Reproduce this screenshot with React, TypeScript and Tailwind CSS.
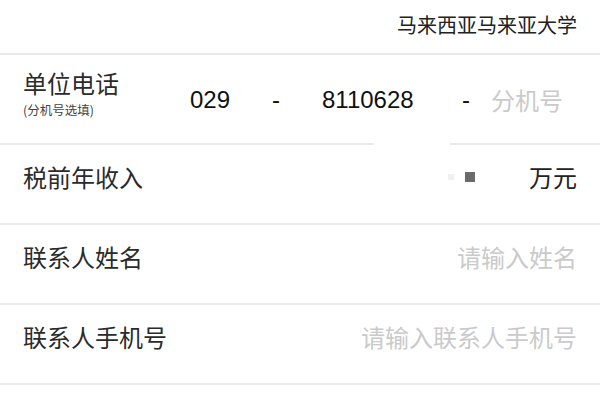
const font = { fontFamily: '"Noto Sans CJK SC", "Noto Sans", sans-serif' }

const Divider = ({ gap = false }: { gap?: boolean }) =>
  gap ? (
    <div className="flex h-[2px]">
      <div className="w-[373px] bg-[#e9e9e9]" />
      <div className="w-[77px]" />
      <div className="flex-1 bg-[#e9e9e9]" />
    </div>
  ) : (
    <div className="h-[2px] bg-[#e9e9e9]" />
  )

const Row = ({ label, children }: { label: string; children: React.ReactNode }) => (
  <div className="flex h-[78px] items-center justify-between px-[23px] pb-[14px]">
    <span className="text-[24px] leading-[30px] text-[#2b2b2b]">{label}</span>
    {children}
  </div>
)

export default function App() {
  return (
    <div className="w-[600px] h-[400px] overflow-hidden bg-white" style={font}>
      <div className="flex h-[53px] items-center justify-end pr-[23px] pb-[4px] text-[20px] text-[#222]">
        马来西亚马来亚大学
      </div>
      <Divider />

      <div className="flex h-[88px] items-center px-[23px]">
        <div className="flex w-[167px] flex-col mb-[11px]">
          <span className="text-[24px] leading-[26px] text-[#2b2b2b]">单位电话</span>
          <span className="mt-[6px] text-[12.5px] leading-[15px] text-[#444]">(分机号选填)</span>
        </div>
        <div
          className="flex items-center pt-[1px] text-[24px] text-[#111]"
          style={{ fontFamily: '"Liberation Sans", "Noto Sans CJK SC", sans-serif' }}
        >
          <span className="w-[82px]">029</span>
          <span className="w-[50px]">-</span>
          <span className="w-[140px]">8110628</span>
          <span className="w-[29px]">-</span>
          <span className="text-[#cacaca]" style={font}>
            分机号
          </span>
        </div>
      </div>
      <Divider gap />

      <Row label="税前年收入">
        <div className="flex items-center">
          <span className="h-[6px] w-[6px] bg-[#f0f0f0]" />
          <span className="ml-[11px] h-[10px] w-[10px] bg-[#6a6a6a]" />
          <span className="ml-[54px] text-[24px] leading-[30px] text-[#222]">万元</span>
        </div>
      </Row>
      <Divider />

      <Row label="联系人姓名">
        <span className="text-[24px] leading-[30px] text-[#cacaca]">请输入姓名</span>
      </Row>
      <Divider />

      <Row label="联系人手机号">
        <span className="text-[24px] leading-[30px] text-[#cacaca]">请输入联系人手机号</span>
      </Row>
      <Divider />
    </div>
  )
}
